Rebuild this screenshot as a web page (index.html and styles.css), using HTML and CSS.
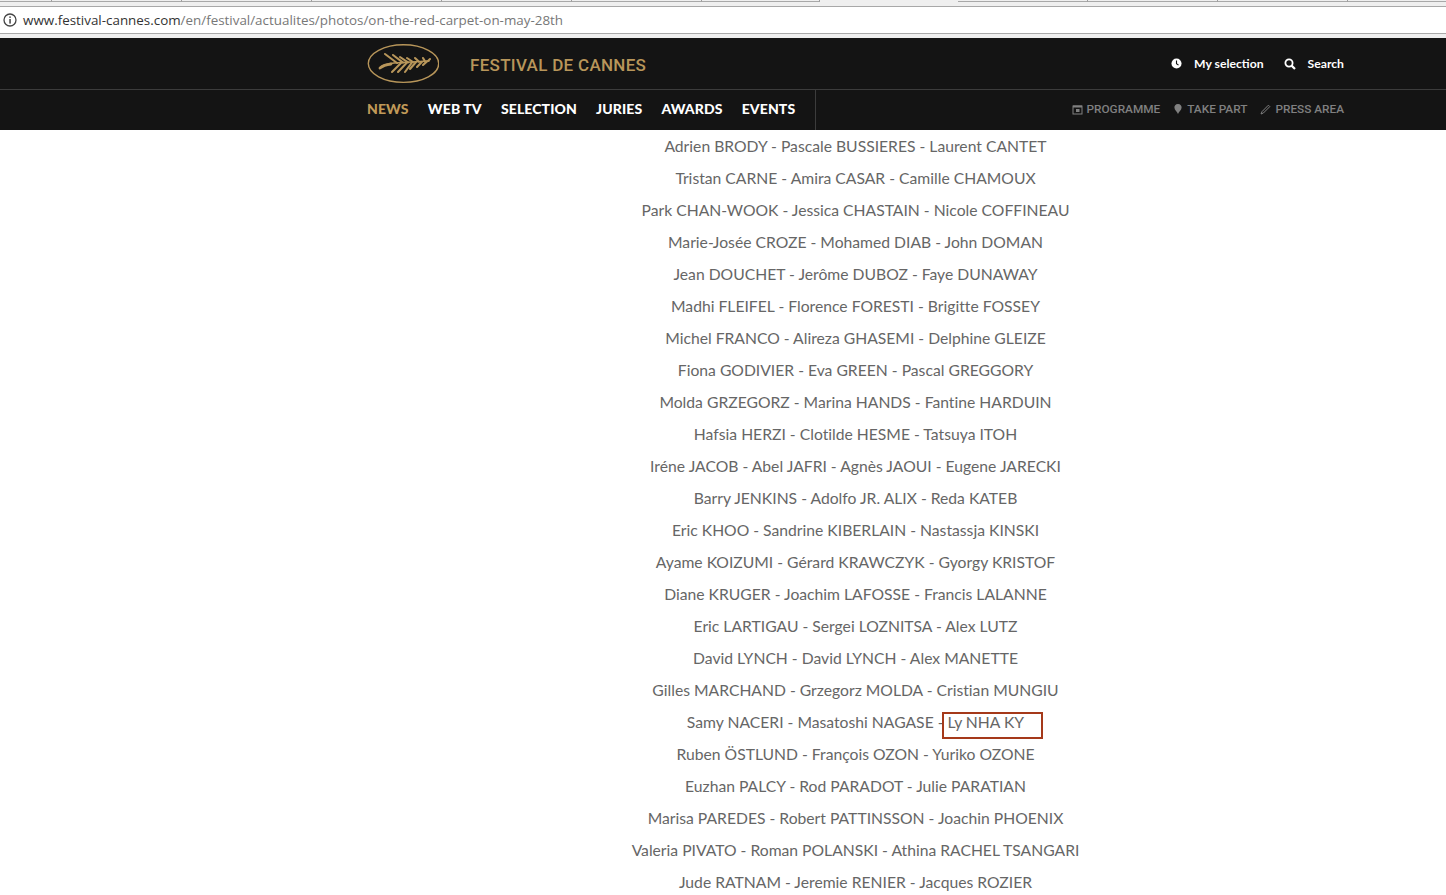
FILE: index.html
```html
<!DOCTYPE html>
<html lang="en">
<head>
<meta charset="utf-8">
<title>On the red carpet on May 28th</title>
<link rel="stylesheet" href="styles.css">
</head>
<body>
<div class="chrome">
  <div class="tabstrip">
    <i class="tab tab-first"></i><i class="tab"></i><i class="tab"></i><i class="tab"></i><i class="tab"></i><i class="tab"></i><i class="tab tab-before"></i>
    <i class="tab-active"></i><i class="tab"></i><i class="tab"></i><i class="tab"></i><i class="tab tab-last"></i>
  </div>
  <div class="addressbar">
    <svg class="info" viewBox="0 0 14 14" width="14" height="14"><circle cx="7" cy="7" r="6" fill="none" stroke="#444" stroke-width="1.3"/><rect x="6.3" y="6" width="1.5" height="4.6" fill="#444"/><rect x="6.3" y="3.4" width="1.5" height="1.5" fill="#444"/></svg>
    <span class="url"><span class="host">www.festival-cannes.com</span>/en/festival/actualites/photos/on-the-red-carpet-on-may-28th</span>
  </div>
</div>
<header class="site">
  <div class="top">
    <a class="brand">
      <svg class="logo" viewBox="0 0 72 40" width="72" height="40">
        <ellipse cx="36.5" cy="19.6" rx="35.2" ry="18.8" fill="none" stroke="#b8965a" stroke-width="1.4"/>
        <g fill="none" stroke="#b8965a" stroke-linecap="round">
          <path d="M13 24 C17 20 22 19.5 27 19 L62 17" stroke-width="1.4"/>
          <path d="M13 24 C16 21.5 20 20.5 24 20" stroke-width="2.8"/>
          <path d="M18 10 L30 19 M26 11 L36 18.6 M33 13 L41 18.4 M40 14 L46 18 M48 14 L52 17.8 M56 14 L58 17.4 M63 15 L61 17" stroke-width="2.1"/>
          <path d="M25 28 L34 19 M31 28 L40 18.6 M38 28 L45 18.4 M43 25 L49 18 M50 23 L55 17.8 M56 21 L60 17.4" stroke-width="2.1"/>
        </g>
      </svg>
      <span class="brand-name">FESTIVAL DE CANNES</span>
    </a>
    <div class="tools">
      <a class="tool">
        <svg viewBox="0 0 12 12" width="11" height="11"><circle cx="6" cy="6" r="5.5" fill="#fff"/><path d="M6 2.8 V6.2 L8.2 7.8" fill="none" stroke="#141414" stroke-width="1.2"/></svg>
        My selection
      </a>
      <a class="tool">
        <svg viewBox="0 0 12 12" width="12" height="12"><circle cx="5" cy="5" r="3.6" fill="none" stroke="#fff" stroke-width="1.8"/><path d="M7.6 7.6 L11 11" stroke="#fff" stroke-width="2.2"/></svg>
        Search
      </a>
    </div>
  </div>
  <nav class="bottom">
    <div class="menu">
      <a class="menu-item is-current">NEWS</a>
      <a class="menu-item">WEB TV</a>
      <a class="menu-item">SELECTION</a>
      <a class="menu-item">JURIES</a>
      <a class="menu-item">AWARDS</a>
      <a class="menu-item">EVENTS</a>
    </div>
    <div class="links">
      <a class="link">
        <svg viewBox="0 0 11 11" width="11" height="11"><rect x="1" y="2" width="9" height="8" fill="none" stroke="#808080"/><rect x="1" y="1.5" width="9" height="2" fill="#808080"/><rect x="4" y="5" width="3.5" height="3" fill="#808080"/></svg>
        PROGRAMME
      </a>
      <a class="link">
        <svg viewBox="0 0 10 12" width="10" height="12"><path d="M5 1 C7.6 1 8.6 3 8.6 4.6 C8.6 7 6 8.4 5 11 C4 8.4 1.4 7 1.4 4.6 C1.4 3 2.4 1 5 1 Z" fill="#808080"/></svg>
        TAKE PART
      </a>
      <a class="link">
        <svg viewBox="0 0 11 11" width="11" height="11"><path d="M1 10 L2 7.6 L8.4 1.2 L9.8 2.6 L3.4 9 Z" fill="none" stroke="#808080"/></svg>
        PRESS AREA
      </a>
    </div>
  </nav>
</header>
<main class="names">
  <p>Adrien BRODY - Pascale BUSSIERES - Laurent CANTET</p>
  <p>Tristan CARNE - Amira CASAR - Camille CHAMOUX</p>
  <p>Park CHAN-WOOK - Jessica CHASTAIN - Nicole COFFINEAU</p>
  <p>Marie-Josée CROZE - Mohamed DIAB - John DOMAN</p>
  <p>Jean DOUCHET - Jerôme DUBOZ - Faye DUNAWAY</p>
  <p>Madhi FLEIFEL - Florence FORESTI - Brigitte FOSSEY</p>
  <p>Michel FRANCO - Alireza GHASEMI - Delphine GLEIZE</p>
  <p>Fiona GODIVIER - Eva GREEN - Pascal GREGGORY</p>
  <p>Molda GRZEGORZ - Marina HANDS - Fantine HARDUIN</p>
  <p>Hafsia HERZI - Clotilde HESME - Tatsuya ITOH</p>
  <p>Iréne JACOB - Abel JAFRI - Agnès JAOUI - Eugene JARECKI</p>
  <p>Barry JENKINS - Adolfo JR. ALIX - Reda KATEB</p>
  <p>Eric KHOO - Sandrine KIBERLAIN - Nastassja KINSKI</p>
  <p>Ayame KOIZUMI - Gérard KRAWCZYK - Gyorgy KRISTOF</p>
  <p>Diane KRUGER - Joachim LAFOSSE - Francis LALANNE</p>
  <p>Eric LARTIGAU - Sergei LOZNITSA - Alex LUTZ</p>
  <p>David LYNCH - David LYNCH - Alex MANETTE</p>
  <p>Gilles MARCHAND - Grzegorz MOLDA - Cristian MUNGIU</p>
  <p>Samy NACERI - Masatoshi NAGASE - <span class="marked">Ly NHA KY</span></p>
  <p>Ruben ÖSTLUND - François OZON - Yuriko OZONE</p>
  <p>Euzhan PALCY - Rod PARADOT - Julie PARATIAN</p>
  <p>Marisa PAREDES - Robert PATTINSSON - Joachin PHOENIX</p>
  <p>Valeria PIVATO - Roman POLANSKI - Athina RACHEL TSANGARI</p>
  <p>Jude RATNAM - Jeremie RENIER - Jacques ROZIER</p>
</main>
</body>
</html>
```

FILE: styles.css
```css
html, body {
  margin: 0;
  padding: 0;
  height: 895px;
  overflow: hidden;
  background: #fff;
}

.chrome {
  background: #efefef;
  padding-bottom: 4px;
}

.tabstrip {
  display: flex;
  height: 6px;
  border-bottom: 1px solid #a8a8a8;
}

.tab {
  flex: none;
  box-sizing: border-box;
  width: 130px;
  height: 2px;
  border-right: 1px solid #9c9c9c;
  border-bottom: 1px solid #a8a8a8;
}

.tab-first { width: 52px; }
.tab-before { width: 118px; }
.tab-last { flex: 1; border-right: 0; }

.tab-active {
  flex: none;
  width: 138px;
  height: 6px;
}

.addressbar {
  display: flex;
  align-items: center;
  gap: 6px;
  height: 26px;
  padding-left: 3px;
  background: #fff;
  border-bottom: 1px solid #a9a9a9;
}

.url {
  font: 13.4px "Open Sans", sans-serif;
  color: #777;
  white-space: nowrap;
}

.host { color: #333; }

.site {
  background: #141414;
}

.top {
  display: flex;
  align-items: center;
  justify-content: space-between;
  height: 51px;
  padding: 0 102px 0 367px;
  border-bottom: 1px solid #3c3c3c;
}

.brand {
  display: flex;
  align-items: center;
  gap: 31px;
}

.logo { display: block; }

.brand-name {
  margin-top: 3px;
  font: 500 17px Roboto, sans-serif;
  letter-spacing: 0.3px;
  color: #b8965a;
}

.tools {
  display: flex;
  gap: 20px;
}

.tool {
  display: flex;
  align-items: center;
  gap: 12px;
  font: 700 12.2px Lato, sans-serif;
  color: #fff;
}

.bottom {
  display: flex;
  justify-content: space-between;
  height: 40px;
  padding: 0 102px 0 367px;
}

.menu {
  display: flex;
  align-items: center;
  gap: 19.2px;
  width: 449px;
  padding-bottom: 3px;
  box-sizing: border-box;
  border-right: 1px solid #3c3c3c;
}

.menu-item {
  font: 900 14px Lato, sans-serif;
  letter-spacing: 0.1px;
  color: #fff;
}

.menu-item.is-current { color: #c09a58; }

.links {
  display: flex;
  align-items: center;
  gap: 13px;
  padding-bottom: 2px;
}

.link {
  display: flex;
  align-items: center;
  gap: 4px;
  font: 500 11.8px Roboto, sans-serif;
  color: #808080;
}

.names {
  padding: 0 0 0 265px;
  text-align: center;
  font: 15.7px/32px Lato, sans-serif;
  font-variant-ligatures: none;
  color: #666;
}

.names p {
  margin: 0;
  white-space: nowrap;
}

.marked { position: relative; }

.marked::after {
  content: "";
  position: absolute;
  left: -6px;
  top: -1px;
  width: 97px;
  height: 23px;
  border: 2px solid #a5391a;
}
```
